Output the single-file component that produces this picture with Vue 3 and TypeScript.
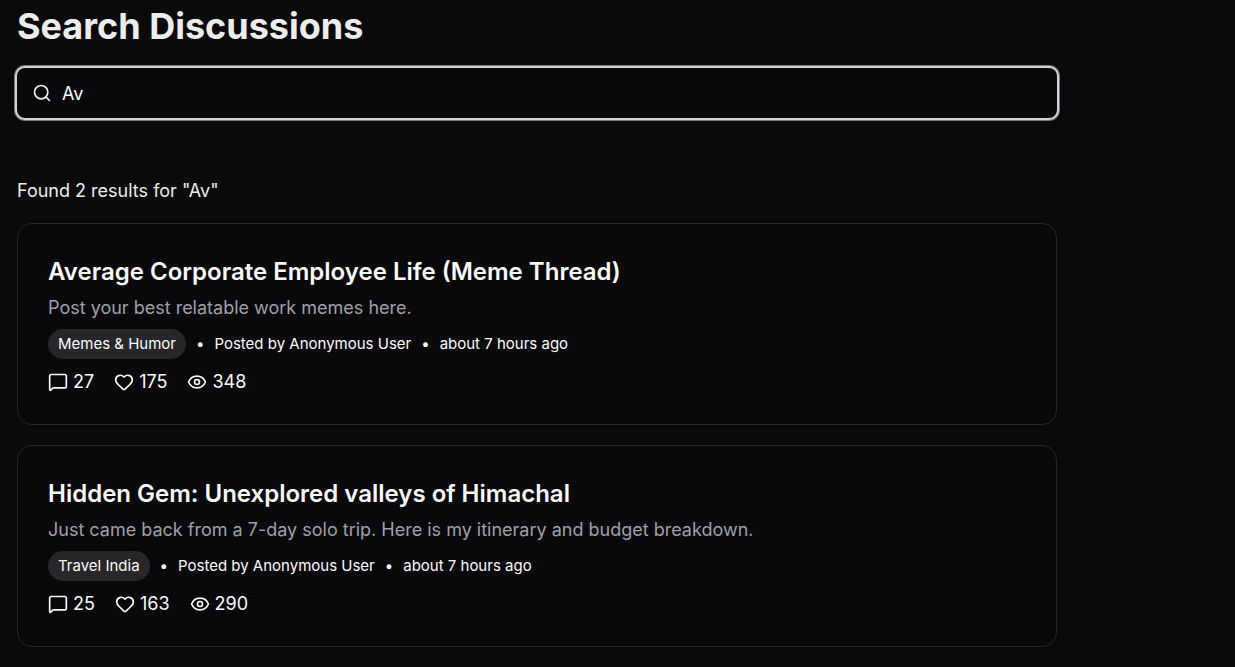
<script setup lang="ts">
import { ref } from 'vue'

interface Discussion {
  id: number
  title: string
  summary: string
  category: string
  author: string
  posted: string
  comments: number
  likes: number
  views: number
}

const query = ref('Av')

const discussions: Discussion[] = [
  {
    id: 1,
    title: 'Average Corporate Employee Life (Meme Thread)',
    summary: 'Post your best relatable work memes here.',
    category: 'Memes & Humor',
    author: 'Anonymous User',
    posted: 'about 7 hours ago',
    comments: 27,
    likes: 175,
    views: 348,
  },
  {
    id: 2,
    title: 'Hidden Gem: Unexplored valleys of Himachal',
    summary: 'Just came back from a 7-day solo trip. Here is my itinerary and budget breakdown.',
    category: 'Travel India',
    author: 'Anonymous User',
    posted: 'about 7 hours ago',
    comments: 25,
    likes: 163,
    views: 290,
  },
]
</script>

<template>
  <main class="page">
    <h1 class="heading">Search Discussions</h1>
    <label class="search">
      <svg class="icon" viewBox="0 0 24 24" aria-hidden="true">
        <circle cx="11" cy="11" r="8" />
        <path d="m21 21-4.34-4.34" />
      </svg>
      <input v-model="query" class="search-input" type="text" aria-label="Search discussions" />
    </label>
    <p class="found">Found {{ discussions.length }} results for "{{ query }}"</p>
    <section class="results">
      <article v-for="item in discussions" :key="item.id" class="card">
        <h2 class="title"><a class="title-link" href="#">{{ item.title }}</a></h2>
        <p class="summary">{{ item.summary }}</p>
        <div class="meta">
          <span class="badge">{{ item.category }}</span>
          <span>•</span>
          <span>Posted by {{ item.author }}</span>
          <span>•</span>
          <span>{{ item.posted }}</span>
        </div>
        <div class="stats">
          <span class="stat">
            <svg class="icon" viewBox="0 0 24 24" aria-hidden="true">
              <path d="M22 17a2 2 0 0 1-2 2H6.828a2 2 0 0 0-1.414.586l-2.202 2.202A.71.71 0 0 1 2 21.286V5a2 2 0 0 1 2-2h16a2 2 0 0 1 2 2z" />
            </svg>
            {{ item.comments }}
          </span>
          <span class="stat">
            <svg class="icon" viewBox="0 0 24 24" aria-hidden="true">
              <path d="M2 9.5a5.5 5.5 0 0 1 9.591-3.676.56.56 0 0 0 .818 0A5.49 5.49 0 0 1 22 9.5c0 2.29-1.5 4-3 5.5l-5.492 5.313a2 2 0 0 1-3 .019L5 15c-1.5-1.5-3-3.2-3-5.5" />
            </svg>
            {{ item.likes }}
          </span>
          <span class="stat">
            <svg class="icon" viewBox="0 0 24 24" aria-hidden="true">
              <path d="M2.06 12.35a1 1 0 0 1 0-.7 10.75 10.75 0 0 1 19.88 0 1 1 0 0 1 0 .7 10.75 10.75 0 0 1-19.88 0" />
              <circle cx="12" cy="12" r="3" />
            </svg>
            {{ item.views }}
          </span>
        </div>
      </article>
    </section>
  </main>
</template>

<style>
body {
  margin: 0;
  background: #0a0a0a;
}
</style>

<style scoped>
.page {
  box-sizing: border-box;
  max-width: 1074px;
  padding: 4px 17px 20px;
  font-family: Inter, "Liberation Sans", sans-serif;
  font-size: 18px;
  line-height: 25px;
  color: #ededed;
}
.heading {
  margin: 0 0 20px;
  font-size: 36px;
  line-height: 44px;
  font-weight: 700;
}
.icon {
  flex: none;
  width: 20px;
  height: 20px;
  fill: none;
  stroke: currentColor;
  stroke-width: 2;
  stroke-linecap: round;
  stroke-linejoin: round;
}
.search {
  display: flex;
  align-items: center;
  gap: 10px;
  height: 50px;
  padding: 0 15px;
  border-radius: 8px;
  background: #09090b;
  box-shadow: 0 0 0 2px #d4d4d8, 0 0 0 3px #77777a;
}
.search-input {
  flex: 1;
  min-width: 0;
  padding: 0;
  border: 0;
  outline: 0;
  background: transparent;
  font: inherit;
  color: #fafafa;
}
.found {
  margin: 60px 0 20px;
}
.results {
  display: grid;
  gap: 20px;
}
.card {
  padding: 30px;
  border: 1px solid #27272a;
  border-radius: 15px;
  background: #09090b;
  color: #fafafa;
}
.title {
  margin: 0 0 5px;
  font-size: 24px;
  line-height: 36px;
  font-weight: 600;
}
.title-link {
  color: inherit;
  text-decoration: none;
}
.summary {
  margin: 0 0 9px;
  color: #9f9fa9;
}
.meta {
  display: flex;
  align-items: center;
  gap: 10px;
  margin-bottom: 10px;
  font-size: 15px;
  line-height: 20px;
}
.badge {
  padding: 5px 10px;
  border-radius: 15px;
  background: #27272a;
}
.stats {
  display: flex;
  gap: 20px;
}
.stat {
  display: flex;
  align-items: center;
  gap: 5px;
}
</style>
